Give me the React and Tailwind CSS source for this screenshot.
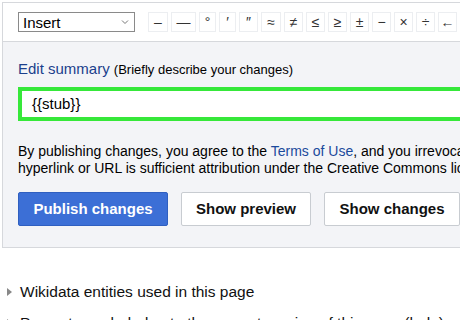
const symbols = [
  { ch: '–', w: 'w-[20px]' },
  { ch: '—', w: 'w-[25px]' },
  { ch: '°', w: 'w-[17px]' },
  { ch: '′', w: 'w-[17px]' },
  { ch: '″', w: 'w-[19px]' },
  { ch: '≈', w: 'w-[20px]' },
  { ch: '≠', w: 'w-[19px]' },
  { ch: '≤', w: 'w-[19px]' },
  { ch: '≥', w: 'w-[19px]' },
  { ch: '±', w: 'w-[19px]' },
  { ch: '−', w: 'w-[19px]' },
  { ch: '×', w: 'w-[19px]' },
  { ch: '÷', w: 'w-[19px]' },
  { ch: '←', w: 'w-[19px]' },
];

const App = () => {
  return (
    <div className="w-[460px] h-[320px] overflow-hidden bg-white font-['Liberation_Sans',Arial,sans-serif] text-[#202122]">
      <div className="ml-[2px] mt-[2px] w-[540px] border border-[#d6d8dc]">
        {/* special characters toolbar */}
        <div className="h-[39px] bg-white flex items-center pl-[15px] border-b border-[#d6d8dc]">
          <div className="w-[117px] h-[20px] border border-[#8a8a8a] flex items-center justify-between pl-[4px] pr-[5px] text-[15px] leading-none text-black">
            <span>Insert</span>
            <svg width="8" height="6" viewBox="0 0 8 6" fill="none" stroke="#777" strokeWidth="1">
              <path d="M1 1.5 L4 4.5 L7 1.5" />
            </svg>
          </div>
          <div className="flex gap-[3px] ml-[13px]">
            {symbols.map((s, i) => (
              <div
                key={i}
                className={`${s.w} h-[20px] border border-[#eceef1] bg-white flex items-center justify-center text-[14px] leading-none text-[#333]`}
              >
                {s.ch}
              </div>
            ))}
          </div>
        </div>

        {/* edit summary panel */}
        <div className="bg-[#f3f4f7] pl-[15px] pt-[18px] pb-[21px]">
          <div className="text-[15px] leading-[18px]">
            <span className="text-[#1b3f8c]">Edit summary</span>{' '}
            <span className="text-[13px] text-black">(Briefly describe your changes)</span>
          </div>
          <div className="mt-[8px] h-[34px] border-[4px] border-[#36e83a] bg-white flex items-center pl-[10px] text-[15px] text-black">
            {'{{stub}}'}
          </div>
          <p className="mt-[22px] text-[14px] leading-[17px] text-black whitespace-nowrap">
            By publishing changes, you agree to the <span className="text-[#1b4a9c]">Terms of Use</span>, and you irrevocably agree to release your contribution
            <br />
            hyperlink or URL is sufficient attribution under the Creative Commons license
          </p>
          <div className="mt-[15px] flex gap-[13px]">
            <button className="w-[150px] h-[34px] bg-[#3c6fd6] border border-[#2f5fc0] rounded-[2px] text-white font-bold text-[15px]">
              Publish changes
            </button>
            <button className="w-[130px] h-[34px] bg-white border border-[#c8ccd1] rounded-[2px] text-[#111] font-bold text-[15px]">
              Show preview
            </button>
            <button className="w-[136px] h-[34px] bg-white border border-[#c8ccd1] rounded-[2px] text-[#111] font-bold text-[15px]">
              Show changes
            </button>
          </div>
        </div>
      </div>

      {/* collapsible lists */}
      <div className="mt-[33px] pl-[7px] text-[15.5px] text-[#111] whitespace-nowrap">
        <div className="flex items-center h-[22px]">
          <svg width="5" height="8" viewBox="0 0 5 8" className="mr-[8px] shrink-0">
            <path d="M0 0 L5 4 L0 8 Z" fill="#888" />
          </svg>
          <span>Wikidata entities used in this page</span>
        </div>
        <div className="flex items-center h-[22px] mt-[9px]">
          <svg width="5" height="8" viewBox="0 0 5 8" className="mr-[8px] shrink-0">
            <path d="M0 0 L5 4 L0 8 Z" fill="#888" />
          </svg>
          <span>Pages transcluded onto the current version of this page (help):</span>
        </div>
      </div>
    </div>
  );
};

export default App;
